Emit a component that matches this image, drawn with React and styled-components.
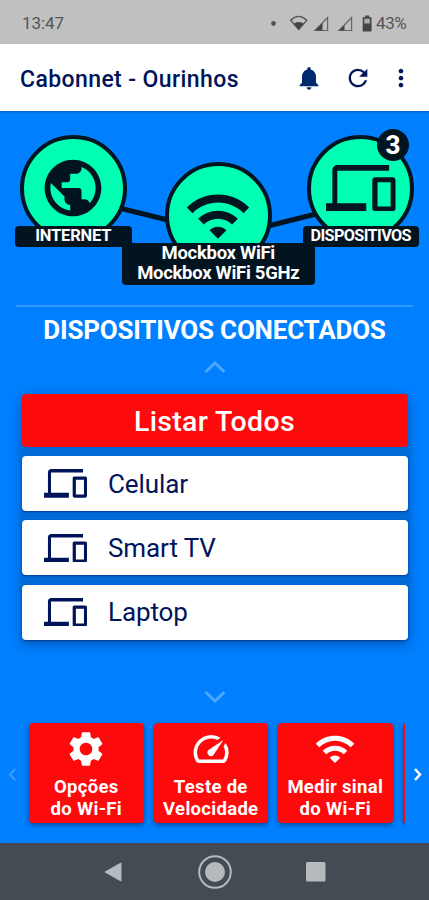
import React from "react";
import styled, { createGlobalStyle } from "styled-components";
import { MdNotifications, MdRefresh, MdMoreVert, MdPublic, MdWifi, MdSettings, MdSpeed } from "react-icons/md";

const GlobalStyle = createGlobalStyle`
  * { box-sizing: border-box; }
  body { margin: 0; background: #0080ff; font-family: Roboto, "Liberation Sans", sans-serif; }
  svg { display: block; flex: none; }
`;

const navy = "#00145a";
const ink = "#021420";

const Screen = styled.div`
  width: 429px;
  height: 900px;
  display: flex;
  flex-direction: column;
  overflow: hidden;
  background: #0080ff;
`;

const StatusBar = styled.header`
  height: 44px;
  flex: none;
  display: flex;
  align-items: center;
  justify-content: space-between;
  padding: 2px 21px 0 22px;
  background: #c0c0c0;
  color: #555;
  font-size: 17px;
  line-height: 20px;
`;

const Clock = styled.span`
  letter-spacing: -0.1px;
`;

const StatusIcons = styled.div`
  display: flex;
  align-items: center;
`;

const Battery = styled.span`
  width: 32px;
  white-space: nowrap;
  letter-spacing: -0.4px;
`;

const AppBar = styled.div`
  height: 67px;
  flex: none;
  display: flex;
  align-items: center;
  padding: 0 14px 0 20px;
  background: #fff;
  color: ${navy};
  box-shadow: 0 1px 2px rgba(0, 0, 0, 0.3);
`;

const Title = styled.h1`
  flex: 1;
  margin: 0;
  padding-top: 3px;
  font-size: 23px;
  font-weight: 500;
  letter-spacing: 0.4px;
  white-space: nowrap;
`;

const Actions = styled.div`
  display: flex;
  align-items: center;
`;

const ActionIcon = styled.span`
  margin-left: ${(p) => p.$gap}px;
`;

const Network = styled.section`
  height: 194px;
  flex: none;
  position: relative;
`;

const Links = styled.svg`
  position: absolute;
  inset: 0;
`;

const Node = styled.div`
  position: absolute;
  left: ${(p) => p.$x}px;
  top: ${(p) => p.$y}px;
  width: ${(p) => p.$w}px;
  display: flex;
  flex-direction: column;
  align-items: center;
`;

const Disc = styled.div`
  width: 107px;
  height: 107px;
  margin-bottom: ${(p) => p.$overlap}px;
  border-radius: 50%;
  border: 4.5px solid ${ink};
  background: #00ffb3;
  color: ${ink};
  display: flex;
  align-items: center;
  justify-content: center;
`;

const Label = styled.div`
  position: relative;
  width: 100%;
  height: ${(p) => p.$h}px;
  border-radius: 4px;
  background: ${ink};
  color: #fff;
  font-weight: 700;
  font-size: ${(p) => p.$size}px;
  line-height: 20.5px;
  letter-spacing: ${(p) => p.$spacing || "0"};
  text-align: center;
  white-space: nowrap;
`;

const Badge = styled.span`
  position: absolute;
  right: 10px;
  top: -6px;
  width: 32px;
  height: 32px;
  border-radius: 50%;
  background: ${ink};
  color: #fff;
  font-size: 26px;
  font-weight: 800;
  line-height: 32px;
  text-align: center;
`;

const Devices = styled.section`
  flex: none;
  height: 412px;
  padding: 0 22px;
  display: flex;
  flex-direction: column;
  align-items: center;
`;

const Divider = styled.hr`
  width: 397px;
  height: 2px;
  margin: 0;
  flex: none;
  border: 0;
  border-radius: 1px;
  background: #359aff;
`;

const Heading = styled.h2`
  margin: 7px 0 14px;
  font-size: 26px;
  line-height: 32px;
  font-weight: 700;
  letter-spacing: -0.2px;
  color: #fff;
  white-space: nowrap;
`;

const List = styled.div`
  width: 386px;
  margin: 20px 0 49px;
  display: flex;
  flex-direction: column;
  gap: 9.2px;
  border-radius: 4px;
  box-shadow: 0 4px 14px rgba(0, 20, 70, 0.4);
  background: #006ad6;
`;

const ListAll = styled.button`
  height: 53px;
  border: 0;
  padding: 2px 0 0;
  border-radius: 4px;
  background: #ff0a0c;
  color: #fff;
  font: 500 28.5px Roboto, sans-serif;
  letter-spacing: 0.3px;
`;

const DeviceRow = styled.div`
  height: 55px;
  border-radius: 4px;
  padding-left: 22px;
  display: flex;
  align-items: center;
  gap: 21.5px;
  background: #fff;
  color: ${navy};
  font-size: 26px;
  letter-spacing: -0.1px;
  box-shadow: 0 1px 2px rgba(0, 20, 70, 0.5);
`;

const Carousel = styled.section`
  flex: 1;
  display: flex;
  align-items: center;
  justify-content: space-between;
  padding: 0 6px 12px 7px;
`;

const Track = styled.div`
  width: 376px;
  height: 108px;
  padding: 3px 0 5px;
  margin-left: 11px;
  margin-right: auto;
  display: flex;
  gap: 10px;
  clip-path: inset(-6px 0 -10px -6px);
`;

const Card = styled.button`
  flex: none;
  width: 114.5px;
  height: 100px;
  border: 0;
  border-radius: 4px;
  padding: 5px 0 0;
  display: flex;
  flex-direction: column;
  align-items: center;
  background: #ff0a0c;
  color: #fff;
  font: 700 18.5px/22px Roboto, sans-serif;
  letter-spacing: 0.3px;
  box-shadow: 0 2px 5px rgba(0, 20, 70, 0.55);
`;

const CardText = styled.span`
  margin-top: 6px;
  white-space: nowrap;
`;

const NavBar = styled.footer`
  height: 57px;
  flex: none;
  display: grid;
  grid-template-columns: 20px 34px 20px;
  column-gap: 74.5px;
  justify-content: center;
  align-items: center;
  justify-items: center;
  background: #444b52;
`;

const StatusGlyphs = () => (
  <svg width="105" height="18" viewBox="271 13 105 18">
    <circle cx="273.5" cy="22.5" r="2.4" fill="#555" />
    <path d="M290.6 19.2Q298.7 11.5 306.8 19.2L298.7 28.5Z" fill="none" stroke="#555" strokeWidth="1.3" />
    <path d="M294 22.4Q298.7 19.5 303.4 22.4L298.7 28.7Z" fill="#444" />
    <path d="M315 29.5 327.6 16.5V29.5Z M339 29.5 351.6 16.5V29.5Z" fill="none" stroke="#666" strokeWidth="1.2" />
    <path d="M315 29.5 322.5 22V29.5Z M339 29.5 344.5 24V29.5Z" fill="#444" />
    <path d="M363.500 17h7.200v12.600h-7.200z" fill="#aaa" stroke="#444" strokeWidth="1.6" />
    <path d="M363 22.500h8.200v7.500H363zM365 14.500h4.200v2H365z" fill="#444" />
  </svg>
);

const DevicesIcon = ({ width }) => (
  <svg width={width} height={(width * 16) / 24} viewBox="0 4 24 16" fill="currentColor">
    <path d="M3.900 6H21.800V4H4c-1.100 0-1.800.9-1.800 2v11.200H0V20h13.900v-2.800H3.900z" />
    <path
      fillRule="evenodd"
      d="M23 8.200h-6c-.55 0-1 .45-1 1V19c0 .55.45 1 1 1h6c.55 0 1-.45 1-1V9.200c0-.55-.45-1-1-1zM22.300 18.300h-4.500V10h4.500z"
    />
  </svg>
);

const Chevron = ({ d, w, h, color, stroke }) => (
  <svg width={w} height={h} viewBox={`0 0 ${w} ${h}`} fill="none" stroke={color} strokeWidth={stroke}>
    <path d={d} />
  </svg>
);

const rows = ["Celular", "Smart TV", "Laptop"];

export default function App() {
  return (
    <Screen>
      <GlobalStyle />
      <StatusBar>
        <Clock>13:47</Clock>
        <StatusIcons>
          <StatusGlyphs />
          <Battery>43%</Battery>
        </StatusIcons>
      </StatusBar>

      <AppBar>
        <Title>Cabonnet - Ourinhos</Title>
        <Actions>
          <ActionIcon $gap={0}><MdNotifications size={28} color="#002a6e" /></ActionIcon>
          <ActionIcon $gap={21}><MdRefresh size={28} /></ActionIcon>
          <ActionIcon $gap={15}><MdMoreVert size={28} /></ActionIcon>
        </Actions>
      </AppBar>

      <Network>
        <Links width="429" height="194">
          <path d="M115 96 180 112M260 117 320 102" stroke={ink} strokeWidth="5" />
        </Links>
        <Node $x={14.5} $y={23.5} $w={117.5}>
          <Disc $overlap={-16}><MdPublic size={68} /></Disc>
          <Label $h={21} $size={16.5} $spacing="-0.2px">INTERNET</Label>
        </Node>
        <Node $x={122} $y={51} $w={192.5}>
          <Disc $overlap={-26.5}><MdWifi size={68} /></Disc>
          <Label $h={42} $size={18.5} $spacing="-0.3px">Mockbox WiFi<br />Mockbox WiFi 5GHz</Label>
        </Node>
        <Node $x={302.5} $y={23.5} $w={116.5}>
          <Disc $overlap={-16}><DevicesIcon width={69.5} /></Disc>
          <Label $h={21} $size={16.2} $spacing="-0.6px">DISPOSITIVOS</Label>
          <Badge>3</Badge>
        </Node>
      </Network>

      <Devices>
        <Divider />
        <Heading>DISPOSITIVOS CONECTADOS</Heading>
        <Chevron w={24} h={14} d="M2.500 12 12 3 21.500 12" color="#4aa8ff" stroke={3} />
        <List>
          <ListAll>Listar Todos</ListAll>
          {rows.map((name) => (
            <DeviceRow key={name}>
              <DevicesIcon width={43} />
              {name}
            </DeviceRow>
          ))}
        </List>
        <Chevron w={24} h={14} d="M2.500 3 12 12 21.500 3" color="#4aa8ff" stroke={3} />
      </Devices>

      <Carousel>
        <Chevron w={11} h={14} d="M8 2 3 7.500 8 13" color="#3b9fff" stroke={2} />
        <Track>
          <Card><MdSettings size={42} /><CardText>Opções<br />do Wi-Fi</CardText></Card>
          <Card><MdSpeed size={42} /><CardText>Teste de<br />Velocidade</CardText></Card>
          <Card><MdWifi size={42} /><CardText>Medir sinal<br />do Wi-Fi</CardText></Card>
          <Card />
        </Track>
        <Chevron w={11} h={14} d="M3 2 8 7.500 3 13" color="#fff" stroke={2.5} />
      </Carousel>

      <NavBar>
        <svg width="20" height="22" viewBox="0 0 20 22"><path d="M2 11 18 2v18z" fill="#b5babd" stroke="#b5babd" strokeLinejoin="round" /></svg>
        <svg width="34" height="34" viewBox="0 0 34 34">
          <circle cx="17" cy="17" r="15.800" fill="none" stroke="#b5babd" strokeWidth="2" />
          <circle cx="17" cy="17" r="10" fill="#b5babd" />
        </svg>
        <svg width="20" height="20" viewBox="0 0 20 20"><rect width="19.500" height="19.500" rx="1.500" fill="#b5babd" /></svg>
      </NavBar>
    </Screen>
  );
}
